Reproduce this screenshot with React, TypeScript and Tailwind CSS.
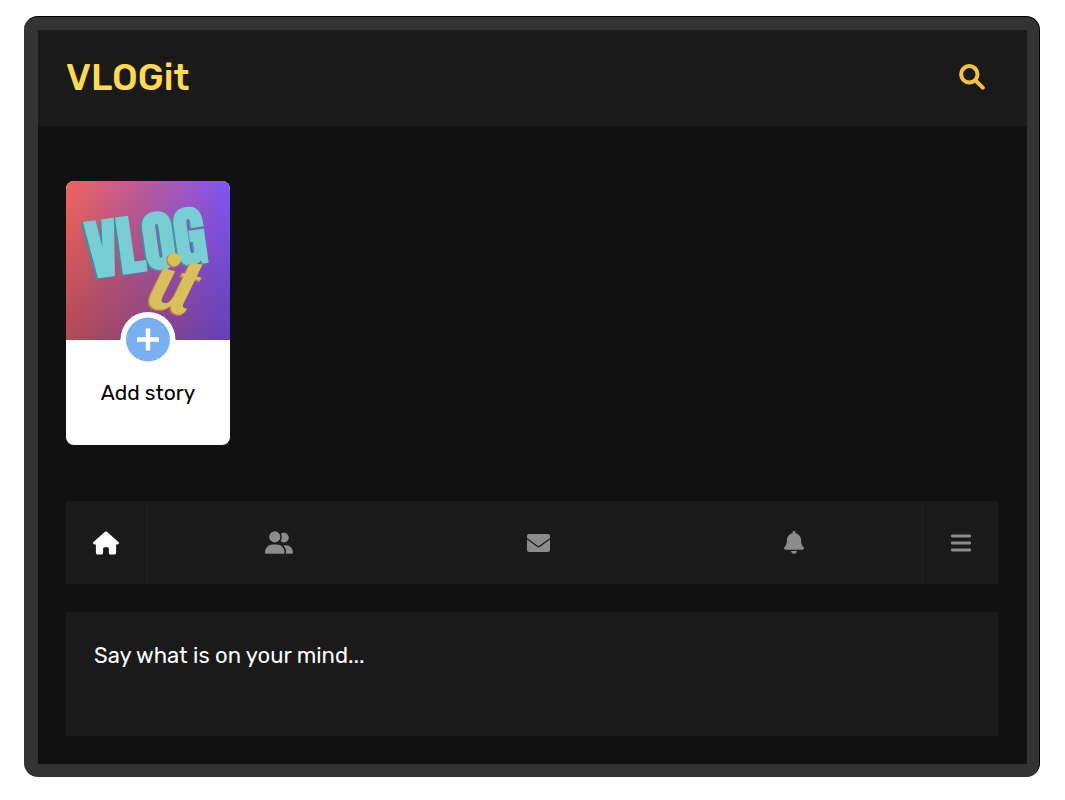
import type { ReactNode } from "react";
import { FaBell, FaHouse, FaUserGroup } from "react-icons/fa6";

const SearchIcon = () => (
  <svg viewBox="0 0 26 26" className="h-[26px] w-[26px]" fill="none" stroke="currentColor" aria-hidden>
    <circle cx="10.3" cy="10.3" r="8.2" strokeWidth="4" />
    <path d="M16.5 16.5l7.3 7.2" strokeWidth="4" strokeLinecap="round" />
  </svg>
);

const MailIcon = () => (
  <svg viewBox="0 0 23 18" className="h-[18px] w-[23px]" aria-hidden>
    <rect width="23" height="18" rx="2" fill="currentColor" />
    <path d="M0 4.8l9.6 7q1.9 1.4 3.8 0l9.6-7" fill="none" stroke="#1a1a1a" strokeWidth="1.3" />
  </svg>
);

const MenuIcon = () => (
  <svg viewBox="0 0 20 18" className="h-[18px] w-5" stroke="currentColor" aria-hidden>
    <path d="M1.3 2h17.4M1.3 9h17.4M1.3 16h17.4" strokeWidth="2.8" strokeLinecap="round" />
  </svg>
);

const NAV: { label: string; icon: ReactNode }[] = [
  { label: "Friends", icon: <FaUserGroup className="h-[23px] w-7" /> },
  { label: "Messages", icon: <MailIcon /> },
  { label: "Notifications", icon: <FaBell className="h-[23px] w-5" /> },
];

function StoryArt() {
  return (
    <svg viewBox="0 0 164 159" className="block h-[159px] w-full" aria-hidden>
      <defs>
        <linearGradient id="sky" x1="0" y1="0" x2="1" y2="0">
          <stop offset="0" stopColor="#f0645f" />
          <stop offset="0.5" stopColor="#b85aa0" />
          <stop offset="1" stopColor="#8054f5" />
        </linearGradient>
        <linearGradient id="shade" x1="0" y1="0" x2="0" y2="1">
          <stop offset="0" stopColor="#201030" stopOpacity="0" />
          <stop offset="1" stopColor="#201030" stopOpacity="0.3" />
        </linearGradient>
      </defs>
      <rect width="164" height="159" fill="url(#sky)" />
      <rect width="164" height="159" fill="url(#shade)" />
      <g
        transform="rotate(-8 82 65)"
        fontFamily="Anton, Impact, 'Liberation Sans', sans-serif"
        fontSize="65"
        textAnchor="middle"
        strokeWidth="2"
      >
        <text x="79" y="90" fill="#3f8fa3" stroke="#3f8fa3">VLOG</text>
        <text x="81" y="89" fill="#78cfd3" stroke="#78cfd3">VLOG</text>
      </g>
      <g
        transform="rotate(14 110 110)"
        fontFamily="Lobster, 'Liberation Serif', serif"
        fontSize="82"
      >
        <text x="86" y="133" fill="#c98243" stroke="#c98243">it</text>
        <text x="87" y="132" fill="#d8c05a">it</text>
      </g>
    </svg>
  );
}

function AddStory() {
  return (
    <button type="button" className="block w-[164px] overflow-hidden rounded-lg bg-white text-black">
      <StoryArt />
      <span className="relative flex h-[105px] justify-center pt-[37px] text-[21px] leading-8">
        <svg viewBox="0 0 56 56" className="absolute -top-7 h-14 w-14" aria-hidden>
          <circle cx="28" cy="27.5" r="27.5" fill="#fff" />
          <circle cx="28" cy="27.5" r="22" fill="#79b0ef" />
          <path d="M28 16.5v22M17 27.5h22" stroke="#fff" strokeWidth="4.4" />
        </svg>
        Add story
      </span>
    </button>
  );
}

export default function App() {
  return (
    <div className="min-h-screen bg-white pt-4 pr-[25px] pl-6 font-['Rubik','Roboto',sans-serif]">
      <div className="rounded-[14px] border-t border-r border-black bg-[#333333] pt-[13px] pr-3 pb-[13px] pl-[14px]">
        <div className="bg-[#111111]">
          <header className="flex h-24 items-center justify-between bg-[#1a1a1a] pr-[42px] pb-0.5 pl-7">
            <h1 className="text-[37px] leading-10 font-medium text-[#ffdb4d]">VLOGit</h1>
            <button type="button" aria-label="Search" className="text-[#f9c23c]">
              <SearchIcon />
            </button>
          </header>

          <main className="pt-[55px] pr-[29px] pb-7 pl-7">
            <AddStory />

            <nav className="mt-14 flex h-[83px] bg-[#1a1a1a] text-[#8c8c8c]">
              <button
                type="button"
                aria-label="Home"
                className="flex w-[82px] items-center justify-center border-r-2 border-[#1e1e1e] text-white"
              >
                <FaHouse className="h-6 w-[26px]" />
              </button>
              <div className="flex flex-1 justify-around">
                {NAV.map((item) => (
                  <button key={item.label} type="button" aria-label={item.label}>
                    {item.icon}
                  </button>
                ))}
              </div>
              <button
                type="button"
                aria-label="Menu"
                className="flex w-[77px] items-center justify-center border-l-2 border-[#1e1e1e]"
              >
                <MenuIcon />
              </button>
            </nav>

            <textarea
              aria-label="New post"
              placeholder="Say what is on your mind..."
              className="mt-7 block h-[124px] w-full resize-none bg-[#1a1a1a] px-7 py-7 text-[22px] leading-8 text-white outline-none placeholder:text-white"
            />
          </main>
        </div>
      </div>
    </div>
  );
}
